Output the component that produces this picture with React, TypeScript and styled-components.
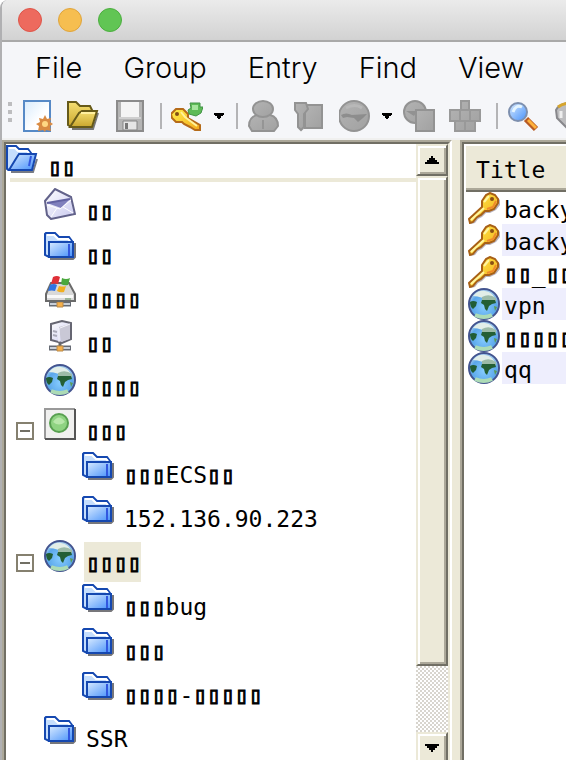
import React from "react";
import styled, { createGlobalStyle } from "styled-components";

const GlobalStyle = createGlobalStyle`
  * { box-sizing: border-box; }
  body { margin: 0; background: #fff; overflow: hidden; }
  button { font: inherit; color: inherit; border: 0; background: none; padding: 0; }
  svg { display: block; flex: none; }
`;

const cream = "#ece9d8";
const mid = "#aca899";
const dark = "#716f64";

const Window = styled.div`
  height: 100vh;
  display: flex;
  flex-direction: column;
  overflow: hidden;
  border-left: 2px solid #b0b0b2;
  border-top-left-radius: 8px;
  background: #f5f6f9;
  color: #000;
`;

const TitleBar = styled.header`
  flex: none;
  height: 42px;
  display: flex;
  align-items: center;
  gap: 16px;
  padding-left: 16px;
  background: linear-gradient(#ebebeb, #d2d2d2);
  border-bottom: 2px solid #a9a9a9;
`;

const Light = styled.button<{ $fill: string; $edge: string }>`
  width: 24px;
  height: 24px;
  border-radius: 50%;
  background: ${(p) => p.$fill};
  border: 1px solid ${(p) => p.$edge};
`;

const MenuBar = styled.nav`
  flex: none;
  height: 52px;
  display: flex;
  align-items: center;
  gap: 41px;
  padding-left: 33px;
  overflow: hidden;
  white-space: nowrap;
  font: 300 29px/52px Inter, "Liberation Sans", sans-serif;
`;

const ToolBar = styled.div`
  flex: none;
  height: 46px;
  display: flex;
  align-items: center;
  overflow: hidden;
  padding-left: 6px;
  border-bottom: 2px solid #f0f0ef;
`;

const Grip = styled.span`
  flex: none;
  width: 6px;
  height: 20px;
  margin-bottom: 8px;
  background: repeating-linear-gradient(#bdbdbf 0 4px, transparent 4px 8px);
  border-right: 2px solid #f5f6f9;
`;

const ToolButton = styled.button`
  flex: none;
  width: 46px;
  height: 44px;
  display: flex;
  align-items: center;
  justify-content: center;
`;

const DropButton = styled.button`
  flex: none;
  width: 18px;
  height: 44px;
  display: flex;
  align-items: center;
  justify-content: center;
`;

const Divider = styled.span`
  flex: none;
  width: 2px;
  height: 26px;
  margin: 0 2px 0 8px;
  background: #b4b4b6;
`;

const Body = styled.main`
  flex: 1;
  min-height: 0;
  display: flex;
  background: ${cream};
  font: 23px/32px "DejaVu Sans Mono", monospace;
`;

const Pane = styled.section`
  display: flex;
  min-width: 0;
  overflow: hidden;
  background: #fff;
  border-top: 2px solid ${mid};
  border-left: 2px solid ${mid};
`;

const TreePane = styled(Pane)`
  flex: 0 0 auto;
  width: 79.8%;
  border-right: 2px solid #fff;
`;

const Sunken = styled.div`
  flex: 1;
  min-width: 0;
  display: flex;
  overflow: hidden;
  border-top: 2px solid ${dark};
  border-left: 2px solid ${dark};
`;

const TreeSunken = styled(Sunken)`
  border-right: 2px solid ${cream};
`;

const Splitter = styled.div`
  flex: none;
  width: 8px;
`;

const Tree = styled.ul`
  flex: 1;
  min-width: 0;
  margin: 0;
  padding: 0;
  list-style: none;
  overflow: hidden;
  white-space: nowrap;
`;

const Node = styled.li<{ $level: number }>`
  height: 44px;
  display: flex;
  align-items: flex-start;
  gap: 8px;
  padding-left: ${(p) => [0, 38, 76][p.$level]}px;
`;

const RootNode = styled(Node)`
  height: 38px;
  margin-bottom: 6px;
  background: linear-gradient(${cream}, ${cream}) 4px 100% / 100% 4px no-repeat;
`;

const ParentNode = styled(Node)`
  padding-left: 10px;
  gap: 0;
`;

const Expander = styled.button`
  flex: none;
  width: 18px;
  height: 18px;
  margin: 14px 10px 0 0;
  display: flex;
  align-items: center;
  justify-content: center;
  border: 2px solid #85806f;
  background: #fff;
  &::before {
    content: "";
    width: 10px;
    height: 2px;
    background: ${dark};
  }
`;

const Label = styled.span<{ $selected?: boolean; $after?: boolean }>`
  height: 40px;
  line-height: 36px;
  margin-top: 2px;
  margin-left: ${(p) => (p.$after ? 8 : 0)}px;
  padding: 3px 0 0 2px;
  background: ${(p) => (p.$selected ? cream : "transparent")};
`;

const Box = styled.span`
  -webkit-text-stroke: 1px #000;
`;

const ScrollBar = styled.div`
  flex: none;
  width: 32px;
  margin-bottom: -4px;
  display: flex;
  flex-direction: column;
  background: repeating-conic-gradient(#d8d5ce 0 25%, #fff 0 50%) 0 0 / 4px 4px;
`;

const raised = `
  border-style: solid;
  border-width: 2px;
  border-color: ${cream} ${dark} ${dark} ${cream};
  box-shadow: inset 2px 2px #fff, inset -2px -2px ${mid};
  background: ${cream};
`;

const ScrollButton = styled.button`
  ${raised}
  flex: none;
  height: 32px;
  display: flex;
  align-items: center;
  justify-content: center;
`;

const Thumb = styled.div`
  ${raised}
  flex: 88 0 0;
`;

const Track = styled.div`
  flex: 12 0 0;
`;

const EntryPane = styled(Pane)`
  flex: 1;
`;

const EntryTable = styled.table`
  width: 100%;
  border-collapse: collapse;
  table-layout: fixed;
  align-self: flex-start;
  white-space: nowrap;
`;

const IconCol = styled.col`
  width: 38px;
`;

const HeadCell = styled.th`
  height: 48px;
  padding: 4px 0 0 12px;
  text-align: left;
  font-weight: normal;
  line-height: 34px;
  overflow: hidden;
  background: ${cream};
  box-shadow: inset 2px 2px #fff, inset 0 -2px ${dark}, inset 0 -4px ${mid};
`;

const IconCell = styled.td`
  height: 32px;
  padding: 0 0 0 4px;
`;

const TextCell = styled.td<{ $alt: boolean }>`
  height: 32px;
  padding: 4px 0 0 2px;
  line-height: 28px;
  overflow: hidden;
  background: ${(p) => (p.$alt ? "#eeeefd" : "#fff")};
`;

const Svg = ({ children }: { children: React.ReactNode }) => (
  <svg width="32" height="32" viewBox="0 0 32 32" aria-hidden="true">{children}</svg>
);

const Arrow = ({ up = false, wide = false }: { up?: boolean; wide?: boolean }) => (
  <svg width={wide ? 14 : 10} height={wide ? 8 : 6} viewBox="0 0 14 8" preserveAspectRatio="none" shapeRendering="crispEdges" aria-hidden="true">
    <path d={up ? "M6 0h2v2h2v2h2v2h2v2H0V6h2V4h2V2h2z" : "M0 0h14v2h-2v2h-2v2H8v2H6V6H4V4H2V2H0z"} />
  </svg>
);

const Gradients = () => (
  <svg width="0" height="0" aria-hidden="true">
    <defs>
      <linearGradient id="blue" x1="0" y1="0" x2="1" y2="1"><stop stopColor="#d9ebff" /><stop offset="1" stopColor="#4590fa" /></linearGradient>
      <linearGradient id="gold" x1="0" y1="0" x2="1" y2="1"><stop stopColor="#fff04a" /><stop offset="1" stopColor="#f3a91c" /></linearGradient>
      <linearGradient id="khaki" x1="0" y1="0" x2="0" y2="1"><stop stopColor="#f5df72" /><stop offset="1" stopColor="#c9a62d" /></linearGradient>
      <linearGradient id="gray" x1="0" y1="0" x2="1" y2="1"><stop stopColor="#b3b3b3" /><stop offset="1" stopColor="#a1a1a1" /></linearGradient>
      <linearGradient id="paper" x1="0" y1="0" x2="1" y2="1"><stop stopColor="#d8ebfc" /><stop offset=".6" stopColor="#fff" /></linearGradient>
      <linearGradient id="lilac" x1="0" y1="0" x2="1" y2="1"><stop stopColor="#fff" /><stop offset="1" stopColor="#c8c8ef" /></linearGradient>
      <radialGradient id="sea" cx=".5" cy=".6" r=".6"><stop stopColor="#86ccff" /><stop offset=".7" stopColor="#5aa6ea" /><stop offset="1" stopColor="#b9d7ef" /></radialGradient>
    </defs>
  </svg>
);

const Folder = () => (
  <Svg>
    <path d="M6 27h23l2-2V11" fill="none" stroke="#77777b" strokeWidth="2" />
    <path d="M1 23V2l1-1h9l4 4h10l3 4v14l-2 2H5z" fill="#c5defd" stroke="#1548b0" strokeWidth="2" />
    <path d="M3 3h7l4 4h10l2 2" fill="none" stroke="#fff" strokeWidth="2" />
    <path d="M5 10h24v15H5z" fill="url(#blue)" stroke="#1548b0" strokeWidth="2" />
    <path d="M25 12v12" stroke="#3157df" strokeWidth="2" />
  </Svg>
);

const OpenFolder = () => (
  <Svg>
    <path d="M5 28h22l4-13" fill="none" stroke="#777b85" strokeWidth="2" />
    <path d="M1 25V2h9l3 3h9l3 4v8L9 26H3z" fill="#c5defd" stroke="#1548b0" strokeWidth="2" />
    <path d="M3 4h6l3 3h9l2 2" fill="none" stroke="#fff" strokeWidth="2" />
    <path d="M3 26l8-13 2-3h17l-4 16z" fill="url(#blue)" stroke="#1548b0" strokeWidth="2" />
    <path d="M25 12l-2 10" stroke="#3157df" strokeWidth="2" />
  </Svg>
);

const Mail = () => (
  <Svg>
    <path d="M1 13L11 1l16 8 4 17L7 31 3 27z" fill="url(#lilac)" stroke="#62628a" strokeWidth="2" />
    <path d="M3 15l23-4-9 9z" fill="#8080bd" /><path d="M3 15l23-4" stroke="#6262a2" strokeWidth="2" />
    <path d="M3 17l13 4 11-9M7 29l6-9M29 25l-10-6" stroke="#fff" strokeWidth="1" fill="none" />
  </Svg>
);

const NetFoot = () => (
  <>
    <path d="M16 22v5" stroke="#666" strokeWidth="3" />
    <path d="M5 28h22" stroke="#666b74" strokeWidth="5" /><path d="M6 28h20" stroke="#c9cfd8" strokeWidth="2" />
    <path d="M13 26h6v5h-6z" fill="#f7b04a" stroke="#b98a4b" />
  </>
);

const NetDrive = () => (
  <Svg>
    <NetFoot />
    <path d="M7 7h18l6 11v7H2v-7z" fill="#d9d9d9" stroke="#6a6a6a" strokeWidth="2" />
    <path d="M3 19h26v3H3z" fill="#f8f8f8" /><path d="M21 23h6" stroke="#9ab49a" strokeWidth="2" />
    <path d="M9 1q4-2 7 0l-2 7q-3-1-7 0z" fill="#df3038" /><path d="M18 2q4 2 8 0l-2 7q-4 1-7-1z" fill="#4aa83d" />
    <path d="M6 9q4-2 7 0l-2 6q-3-1-7 0z" fill="#2f73e3" /><path d="M15 10q4 1 7 0l-2 6q-4 1-7-1z" fill="#f1af20" />
  </Svg>
);

const Server = () => (
  <Svg>
    <NetFoot />
    <path d="M7 4L18 1l9 2v16l-9 4-11-3z" fill="url(#lilac)" stroke="#666672" strokeWidth="2" />
    <path d="M15 7l11-3v15l-9 3z" fill="#c9c8d6" /><path d="M8 6l7 2v14M16 8l10-4" fill="none" stroke="#f4f4fa" strokeWidth="1" />
    <path d="M9 11l4 1M9 15l4 1" stroke="#a9a9b8" strokeWidth="2" />
  </Svg>
);

const Globe = () => (
  <Svg>
    <circle cx="16" cy="16" r="15" fill="url(#sea)" stroke="#43548f" strokeWidth="2" />
    <path d="M5 8Q10 2 17 3t10 7q-6 2-12 0T5 8z" fill="#e2eee8" /><path d="M14 9q7-4 14 1v3H14z" fill="#9dbba8" />
    <path d="M2 14q3-2 7 0l-1 4-3 3q-3-2-3-7z" fill="#215d35" />
    <path d="M14 12h13l1 3-4 1-3 2-2 5-2-2-1-4-3-2z" fill="#245f35" />
    <path d="M7 27q9 4 17 0" stroke="#acdbb6" strokeWidth="4" fill="none" /><path d="M26 18l3 1-2 4z" fill="#5b9a55" />
  </Svg>
);

const GreenSquare = () => (
  <Svg>
    <path d="M1 1h30v30H1z" fill="#f0f0ef" /><path d="M1 31V1h30" stroke="#999" strokeWidth="2" fill="none" /><path d="M31 1v30H1" stroke="#555" strokeWidth="2" fill="none" />
    <circle cx="15" cy="15" r="9" fill="#8fd382" stroke="#58a050" strokeWidth="2" /><path d="M9 14q6-9 12 0-6 5-12 0z" fill="#c9efba" opacity=".7" />
  </Svg>
);

const KeyIcon = () => (
  <Svg>
    <path d="M14 10l4-7 4-2 5 2 4 4v5l-4 5-6 3h-4l-4 4-4 2-3 4-4 1-1-4L14 16z" fill="#70657c" opacity=".5" transform="translate(1 1)" />
    <path d="M14 9l4-6 4-2 5 2 3 4v4l-4 6-5 2h-4l-4 4-4 2-4 5-3 1-1-4L14 15z" fill="url(#gold)" stroke="#a86016" strokeWidth="2" />
    <path d="M3 28L16 16M16 10l5-6" stroke="#fff5a0" strokeWidth="2" fill="none" /><circle cx="24" cy="7" r="2" fill="#8a4e13" />
    <path d="M28 9l-3 6-6 2" stroke="#ef8a2b" strokeWidth="2" fill="none" />
  </Svg>
);

const NewDoc = () => (
  <Svg>
    <path d="M3 1h26v30H3z" fill="url(#paper)" stroke="#5689c6" strokeWidth="2" />
    <path d="M24 15l2 4 4-1-1 4 3 2-3 2 1 5-5-1-1 2-2-2-5 1 1-5-3-2 4-2-1-4 4 1z" fill="#d98a42" />
    <circle cx="24" cy="24" r="3" fill="#ffd783" />
  </Svg>
);

const GoldFolder = () => (
  <Svg>
    <path d="M5 29h21l5-16" fill="none" stroke="#777" strokeWidth="2" />
    <path d="M1 25V2h8l4 4h10l2 4v6L9 27H4z" fill="url(#khaki)" stroke="#665a19" strokeWidth="2" />
    <path d="M3 27l9-14 3-2h15l-5 16z" fill="url(#khaki)" stroke="#665a19" strokeWidth="2" /><path d="M14 13h14" stroke="#fff0a0" strokeWidth="2" />
  </Svg>
);

const Save = () => (
  <Svg>
    <path d="M4 1h26v30H4z" fill="#b5b5b5" stroke="#8b8b8b" strokeWidth="2" /><path d="M8 2h18v15H8z" fill="#f4f4f4" />
    <path d="M10 21h14v9H10z" fill="#e6e6e6" stroke="#858585" /><path d="M12 23h3v6h-3z" fill="#777" /><path d="M6 18h22" stroke="#cfcfcf" strokeWidth="2" />
  </Svg>
);

const AddKey = () => (
  <Svg>
    <path d="M0 14l5-5h7l5 5v4l12 7v5h-5l-5-3-6-3-2-2H5l-4-4z" fill="url(#gold)" stroke="#b56b19" strokeWidth="2" />
    <circle cx="6" cy="14" r="2" fill="#814e16" /><path d="M10 12l4 5 12 9" fill="none" stroke="#fff29b" strokeWidth="2" />
    <path d="M19 3h10v4h3l-2 6-5 3-7-2-1-4 3-2z" fill="#5dba57" stroke="#439346" strokeWidth="1" /><path d="M21 5h6v5h-6z" fill="#a5e49c" />
  </Svg>
);

const grayEdge = { fill: "url(#gray)", stroke: "#939393", strokeWidth: 2 };

const User = () => (
  <Svg>
    <path d="M10 15q-8 2-8 11l3 5h22l4-5q0-9-8-11z" {...grayEdge} /><ellipse cx="16" cy="9" rx="10" ry="8" {...grayEdge} />
    <path d="M16 20v9" stroke="#959595" strokeWidth="2" fill="none" />
  </Svg>
);

const UserKey = () => (
  <Svg>
    <path d="M12 5h17v23H12z" {...grayEdge} /><path d="M2 3h11l2 6-4 5v13l-3 3-3-3V14l-3-4z" {...grayEdge} />
  </Svg>
);

const GrayGlobe = () => (
  <Svg>
    <circle cx="15" cy="16" r="15" {...grayEdge} /><path d="M2 15q5-3 11 0l15-1-4 4-5 4-4-4-7-1-4 1z" fill="#868686" opacity=".8" /><path d="M7 8q9-5 16 0" stroke="#b8b8b8" strokeWidth="3" fill="none" />
  </Svg>
);

const Duplicate = () => (
  <Svg><circle cx="12" cy="12" r="11" {...grayEdge} /><path d="M3 11h11l-3 5z" fill="#929292" /><path d="M13 10h18v21H13z" {...grayEdge} /></Svg>
);

const Blocks = () => (
  <Svg><path d="M12 1h8v9h-8zM1 10h10v11H1zM11 10h10v11H11zM21 10h10v11H21zM6 21h10v10H6zM16 21h10v10H16z" fill="url(#gray)" stroke="#999" strokeWidth="2" /></Svg>
);

const Search = () => (
  <Svg>
    <path d="M19 19l10 10" stroke="#b85b24" strokeWidth="6" /><path d="M21 20l8 8" stroke="#ffb13b" strokeWidth="3" />
    <circle cx="11" cy="12" r="9" fill="url(#blue)" stroke="#7d8fae" strokeWidth="2" /><path d="M6 12q3-8 9-5" stroke="#e5f5ff" strokeWidth="3" fill="none" />
  </Svg>
);

const Tools = () => (
  <Svg><path d="M3 10q4-7 14-7l10 4v15L16 30 4 18z" fill="#bdbdbf" stroke="#87878b" strokeWidth="2" /><path d="M5 7q5-4 14-4" fill="none" stroke="#d6a52e" strokeWidth="3" /><path d="M8 11v7" stroke="#eee" strokeWidth="3" /></Svg>
);

const Text = ({ children }: { children: string }) => (
  <>
    {children.split(/(▯+)/).map((part, i) => (i % 2 ? <Box key={i}>{part}</Box> : part))}
  </>
);

type TreeItem = { icon: React.FC; text: string; level: number; open?: boolean; selected?: boolean };

const nodes: TreeItem[] = [
  { icon: Mail, text: "▯▯", level: 1 },
  { icon: Folder, text: "▯▯", level: 1 },
  { icon: NetDrive, text: "▯▯▯▯", level: 1 },
  { icon: Server, text: "▯▯", level: 1 },
  { icon: Globe, text: "▯▯▯▯", level: 1 },
  { icon: GreenSquare, text: "▯▯▯", level: 1, open: true },
  { icon: Folder, text: "▯▯▯ECS▯▯", level: 2 },
  { icon: Folder, text: "152.136.90.223", level: 2 },
  { icon: Globe, text: "▯▯▯▯", level: 1, open: true, selected: true },
  { icon: Folder, text: "▯▯▯bug", level: 2 },
  { icon: Folder, text: "▯▯▯", level: 2 },
  { icon: Folder, text: "▯▯▯▯-▯▯▯▯▯", level: 2 },
  { icon: Folder, text: "SSR", level: 1 },
];

const entries = [
  { icon: KeyIcon, title: "backy" },
  { icon: KeyIcon, title: "backy" },
  { icon: KeyIcon, title: "▯▯_▯▯" },
  { icon: Globe, title: "vpn" },
  { icon: Globe, title: "▯▯▯▯▯" },
  { icon: Globe, title: "qq" },
];

const Tool = ({ label, icon: Icon, disabled }: { label: string; icon: React.FC; disabled?: boolean }) => (
  <ToolButton aria-label={label} disabled={disabled}><Icon /></ToolButton>
);

export default function App() {
  return (
    <Window>
      <GlobalStyle />
      <TitleBar>
        <Light aria-label="Close" $fill="#ed6a5e" $edge="#de5549" />
        <Light aria-label="Minimize" $fill="#f6be50" $edge="#dfa43c" />
        <Light aria-label="Zoom" $fill="#61c554" $edge="#4cae3f" />
        <Gradients />
      </TitleBar>
      <MenuBar>
        {["File", "Group", "Entry", "Find", "View", "Tools"].map((m) => <button key={m}>{m}</button>)}
      </MenuBar>
      <ToolBar role="toolbar">
        <Grip />
        <Tool label="New" icon={NewDoc} />
        <Tool label="Open" icon={GoldFolder} />
        <Tool label="Save" icon={Save} />
        <Divider />
        <Tool label="Add entry" icon={AddKey} />
        <DropButton aria-label="Add entry options"><Arrow /></DropButton>
        <Divider />
        <Tool label="Copy user name" icon={User} disabled />
        <Tool label="Copy password" icon={UserKey} disabled />
        <Tool label="Open URL" icon={GrayGlobe} disabled />
        <DropButton aria-label="URL options"><Arrow /></DropButton>
        <Tool label="Copy URL" icon={Duplicate} disabled />
        <Tool label="Auto-type" icon={Blocks} disabled />
        <Divider />
        <Tool label="Find" icon={Search} />
        <Tool label="Options" icon={Tools} />
      </ToolBar>
      <Body>
        <TreePane>
          <TreeSunken>
            <Tree>
              <RootNode $level={0}><OpenFolder /><Label><Text>▯▯</Text></Label></RootNode>
              {nodes.map(({ icon: Icon, ...n }, i) =>
                n.open ? (
                  <ParentNode key={i} $level={n.level}>
                    <Expander aria-label="Collapse" aria-expanded />
                    <Icon />
                    <Label $after $selected={n.selected}><Text>{n.text}</Text></Label>
                  </ParentNode>
                ) : (
                  <Node key={i} $level={n.level}><Icon /><Label><Text>{n.text}</Text></Label></Node>
                )
              )}
            </Tree>
            <ScrollBar>
              <ScrollButton aria-label="Scroll up"><Arrow up wide /></ScrollButton>
              <Thumb />
              <Track />
              <ScrollButton aria-label="Scroll down"><Arrow wide /></ScrollButton>
            </ScrollBar>
          </TreeSunken>
        </TreePane>
        <Splitter />
        <EntryPane>
          <Sunken>
            <EntryTable>
              <colgroup><IconCol /><col /></colgroup>
              <thead><tr><HeadCell colSpan={2}>Title</HeadCell></tr></thead>
              <tbody>
                {entries.map(({ icon: Icon, title }, i) => (
                  <tr key={i}><IconCell><Icon /></IconCell><TextCell $alt={i % 2 === 1}><Text>{title}</Text></TextCell></tr>
                ))}
              </tbody>
            </EntryTable>
          </Sunken>
        </EntryPane>
      </Body>
    </Window>
  );
}
